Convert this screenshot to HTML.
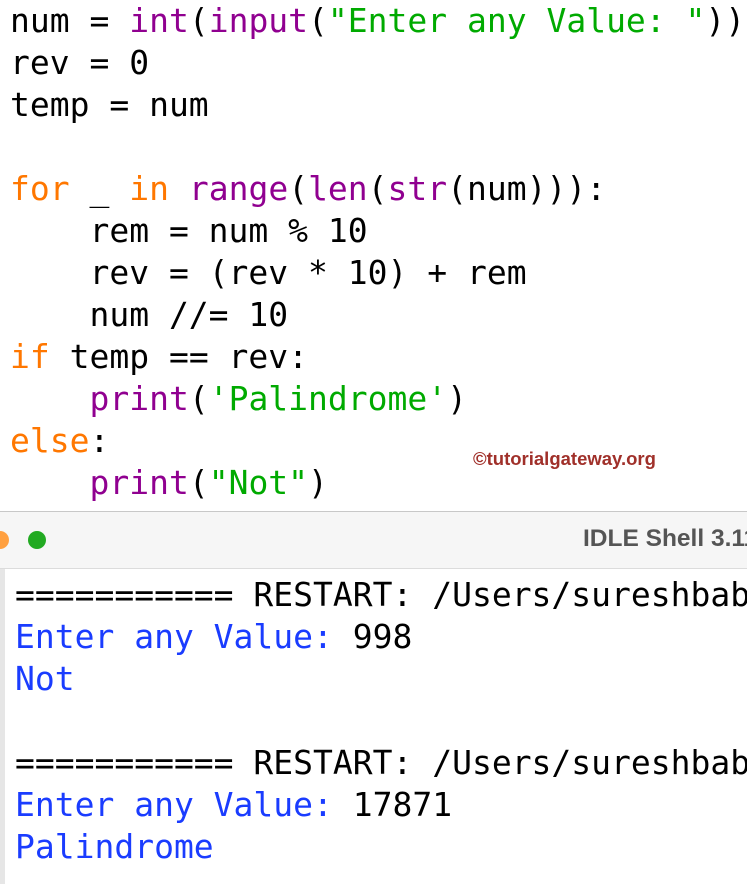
<!DOCTYPE html>
<html><head><style>
body{margin:0;width:747px;height:884px;overflow:hidden;background:#fff;position:relative;font-family:"DejaVu Sans Mono","Liberation Mono",monospace;}
.l{position:absolute;left:10px;font-size:33px;line-height:42px;white-space:pre;color:#000;height:42px;}
.k{color:#ff7700}.b{color:#900090}.s{color:#00aa00}.u{color:#1a3cff}
#bar{position:absolute;left:0;top:511px;width:747px;height:56px;background:#f6f6f6;border-top:1px solid #c8c8c8;border-bottom:1px solid #dcdcdc;}
#sh{position:absolute;left:0;top:569px;width:747px;height:315px;border-left:5px solid #e6e6e6;box-sizing:border-box;}
</style></head><body>
<div class="l" style="top:0">num = <span class="b">int</span>(<span class="b">input</span>(<span class="s">"Enter any Value: "</span>))</div>
<div class="l" style="top:42px">rev = 0</div>
<div class="l" style="top:84px">temp = num</div>
<div class="l" style="top:168px"><span class="k">for</span> _ <span class="k">in</span> <span class="b">range</span>(<span class="b">len</span>(<span class="b">str</span>(num))):</div>
<div class="l" style="top:210px">    rem = num % 10</div>
<div class="l" style="top:252px">    rev = (rev * 10) + rem</div>
<div class="l" style="top:294px">    num //= 10</div>
<div class="l" style="top:336px"><span class="k">if</span> temp == rev:</div>
<div class="l" style="top:378px">    <span class="b">print</span>(<span class="s">'Palindrome'</span>)</div>
<div class="l" style="top:420px"><span class="k">else</span>:</div>
<div class="l" style="top:462px">    <span class="b">print</span>(<span class="s">"Not"</span>)</div>
<div style="position:absolute;left:473px;top:448px;font-family:'Liberation Sans',sans-serif;font-weight:bold;font-size:18.5px;color:#a0302a;white-space:nowrap">©tutorialgateway.org</div>
<div id="bar">
<div style="position:absolute;left:-9px;top:19px;width:18px;height:18px;border-radius:50%;background:#ffa040"></div>
<div style="position:absolute;left:28px;top:19px;width:18px;height:18px;border-radius:50%;background:#22aa22"></div>
<div style="position:absolute;left:583px;top:13px;font-family:'Liberation Sans',sans-serif;font-weight:bold;font-size:24.5px;color:#555;white-space:nowrap">IDLE Shell 3.11</div>
</div>
<div id="sh"></div>
<div class="l" style="top:574px;left:15px">=========== RESTART: /Users/sureshbabu</div>
<div class="l" style="top:616px;left:15px"><span class="u">Enter any Value: </span>998</div>
<div class="l u" style="top:658px;left:15px">Not</div>
<div class="l" style="top:742px;left:15px">=========== RESTART: /Users/sureshbabu</div>
<div class="l" style="top:784px;left:15px"><span class="u">Enter any Value: </span>17871</div>
<div class="l u" style="top:826px;left:15px">Palindrome</div>
</body></html>
